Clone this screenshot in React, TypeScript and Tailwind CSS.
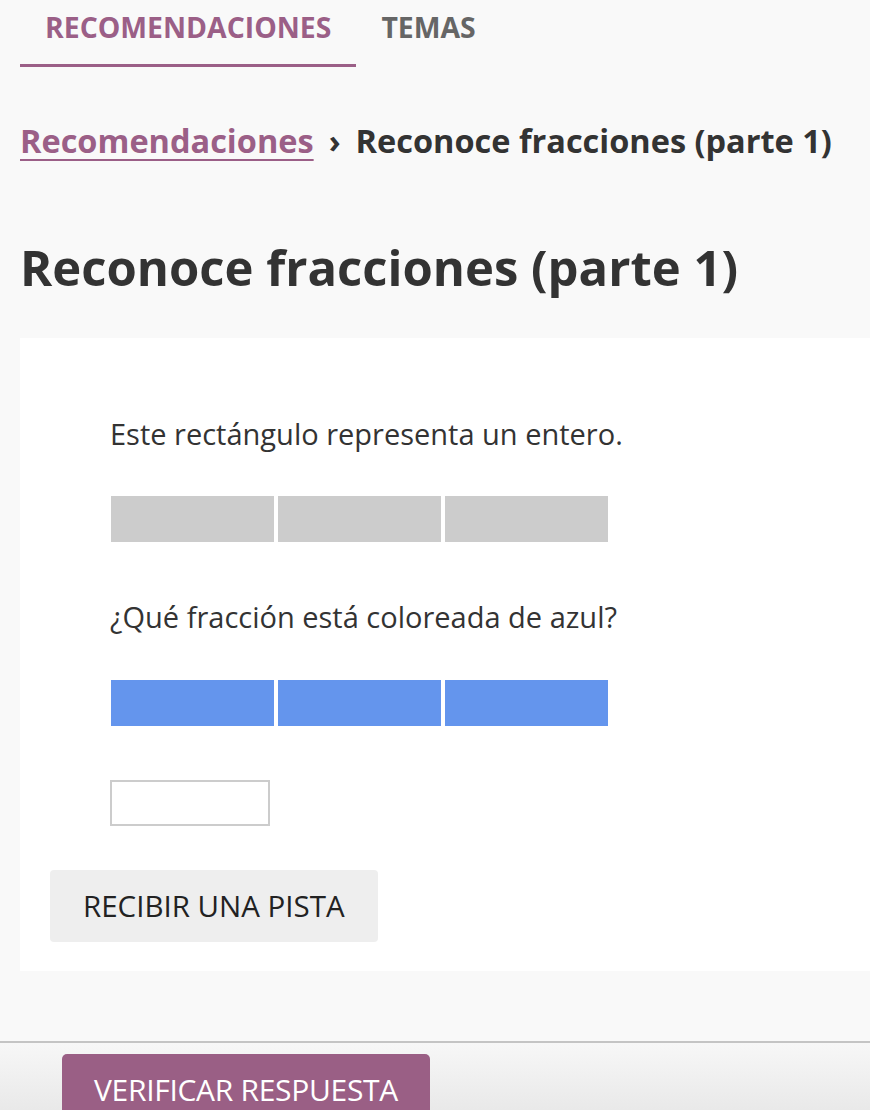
export default function App() {
  const segments = [0, 1, 2];

  return (
    <div className="min-h-[1110px] bg-[#f9f9f9] font-['Open_Sans',sans-serif] text-[#333] flex flex-col">
      {/* Pestañas */}
      <div className="flex px-[20px]">
        <div className="h-[67px] px-[25px] pt-[8px] border-b-[3px] border-[#9b5f87] text-[28.4px] leading-[38px] font-bold text-[#9b5f87]">
          RECOMENDACIONES
        </div>
        <div className="h-[67px] px-[25px] pt-[8px] text-[28.4px] leading-[38px] font-bold text-[#666]">
          TEMAS
        </div>
      </div>

      {/* Breadcrumb */}
      <div className="mt-[54px] px-[20px] flex items-center text-[32.5px] leading-[40px] font-bold">
        <a className="text-[#9b5f87] underline underline-offset-[6px] decoration-[2px]">Recomendaciones</a>
        <span className="mx-[15px] text-[#333]">›</span>
        <span className="text-[#333]">Reconoce fracciones (parte 1)</span>
      </div>

      <h1 className="mt-[76px] px-[20px] text-[49px] leading-[60px] font-bold text-[#333]">
        Reconoce fracciones (parte 1)
      </h1>

      {/* Ejercicio */}
      <div className="mt-[41px] ml-[20px] bg-white pt-[76px] pb-[29px]">
        <div className="pl-[90px]">
          <p className="text-[29px] leading-[40px]">Este rectángulo representa un entero.</p>
          <div className="mt-[42px] ml-[1px] flex gap-[4px] w-[497px]">
            {segments.map((i) => (
              <div key={i} className="h-[46px] flex-1 bg-[#cccccc]" />
            ))}
          </div>
          <p className="mt-[55px] text-[29px] leading-[40px]">¿Qué fracción está coloreada de azul?</p>
          <div className="mt-[43px] ml-[1px] flex gap-[4px] w-[497px]">
            {segments.map((i) => (
              <div key={i} className="h-[46px] flex-1 bg-[#6495ed]" />
            ))}
          </div>
          <input
            type="text"
            className="mt-[54px] block w-[160px] h-[46px] border-2 border-[#cccccc] bg-white outline-none px-2 text-[24px]"
          />
        </div>
        <button className="mt-[44px] ml-[30px] h-[72px] px-[33px] rounded-[4px] bg-[#eeeeee] text-[29.5px] text-[#222]">
          RECIBIR UNA PISTA
        </button>
      </div>

      {/* Pie */}
      <div className="mt-[70px] flex-1 border-t-2 border-[#c4c4c4] bg-gradient-to-b from-[#f7f7f7] to-[#e6e6e6] pt-[11px] pl-[62px]">
        <button className="h-[70px] px-[32px] rounded-t-[5px] bg-[#9a5f85] text-white text-[30px] tracking-[-0.3px]">
          VERIFICAR RESPUESTA
        </button>
      </div>
    </div>
  );
}
